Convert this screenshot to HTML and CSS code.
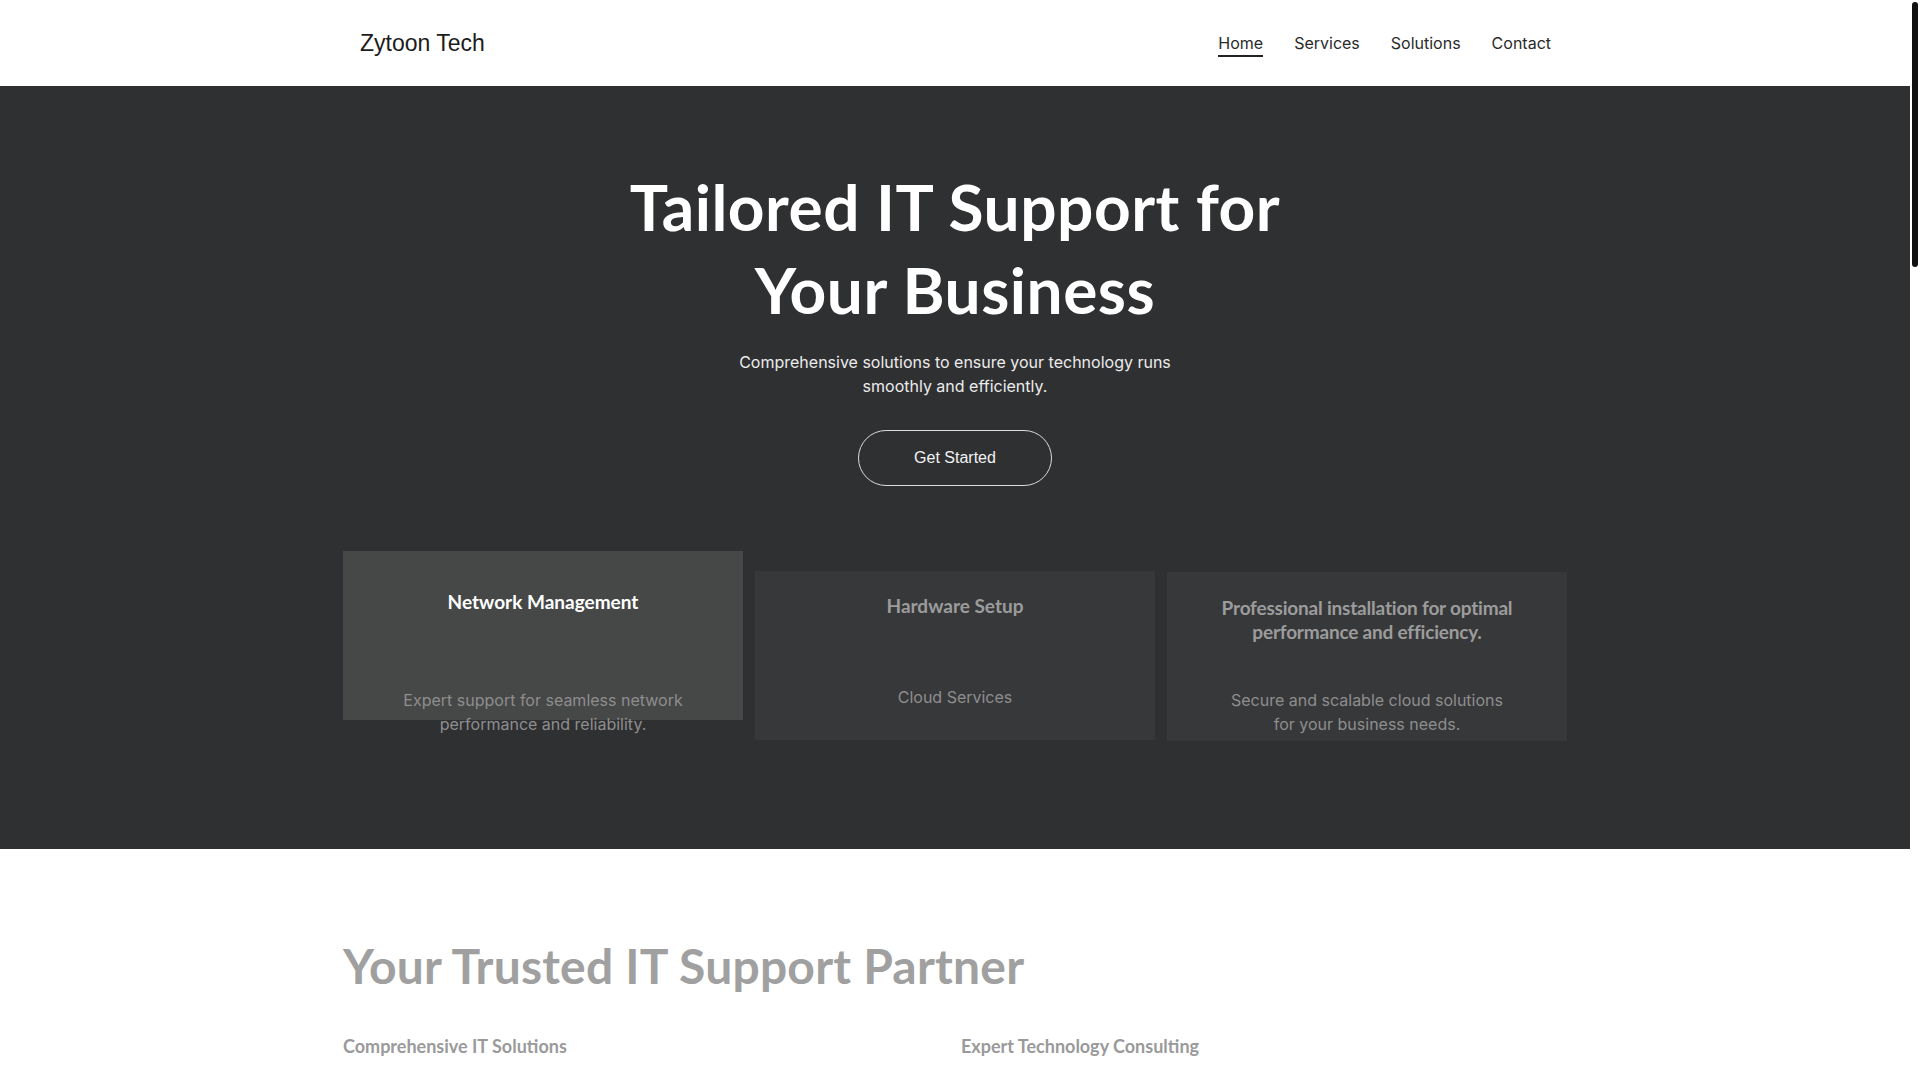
FILE: index.html
```html
<!DOCTYPE html>
<html lang="en">
<head>
<meta charset="utf-8">
<title>Zytoon Tech</title>
<link rel="stylesheet" href="styles.css">
</head>
<body>
<div class="scroll-thumb" aria-hidden="true"></div>
<header class="site-header">
  <div class="container header-inner">
    <a class="logo" href="#">Zytoon Tech</a>
    <nav class="nav">
      <a class="nav-link is-active" href="#">Home</a>
      <a class="nav-link" href="#services">Services</a>
      <a class="nav-link" href="#solutions">Solutions</a>
      <a class="nav-link" href="#contact">Contact</a>
    </nav>
  </div>
</header>

<main>
  <section class="hero">
    <div class="container hero-inner">
      <h1 class="hero-title">Tailored IT Support for Your Business</h1>
      <p class="hero-lead">Comprehensive solutions to ensure your technology runs smoothly and efficiently.</p>
      <a class="btn-outline" href="#contact">Get Started</a>

      <div class="cards">
        <div class="card card--one">
          <h3 class="card-title">Network Management</h3>
          <p class="card-text">Expert support for seamless network performance and reliability.</p>
        </div>
        <div class="card card--two">
          <h3 class="card-title">Hardware Setup</h3>
          <p class="card-text">Cloud Services</p>
        </div>
        <div class="card card--three">
          <h3 class="card-title">Professional installation for optimal performance and efficiency.</h3>
          <p class="card-text">Secure and scalable cloud solutions for your business needs.</p>
        </div>
      </div>
    </div>
  </section>

  <section class="about" id="services">
    <div class="container">
      <h2 class="section-title">Your Trusted IT Support Partner</h2>
      <div class="about-grid">
        <div class="about-col">
          <h3 class="about-heading">Comprehensive IT Solutions</h3>
          <p class="about-text">From day-to-day helpdesk support to long-term infrastructure planning, we keep your systems secure, stable and ready to grow with your business.</p>
        </div>
        <div class="about-col">
          <h3 class="about-heading">Expert Technology Consulting</h3>
          <p class="about-text">Our consultants help you choose the right tools, streamline your workflows and get the most value out of every technology investment.</p>
        </div>
      </div>
    </div>
  </section>

  <section class="band" id="solutions">
    <div class="container">
      <h2 class="section-title">Solutions</h2>
      <p class="about-text">Managed services, cybersecurity, cloud migration and on-site support tailored to your team.</p>
    </div>
  </section>

  <section class="band band--dark" id="contact">
    <div class="container">
      <h2 class="section-title section-title--light">Contact</h2>
      <p class="about-text">Get in touch to discuss how we can support your business.</p>
    </div>
  </section>
</main>

<footer class="site-footer">
  <div class="container">© Zytoon Tech</div>
</footer>
</body>
</html>
```

FILE: styles.css
```css
* { box-sizing: border-box; }

html { background: #ffffff; }

body {
  margin: 0 10px 0 0;
  font-family: "Inter", "Liberation Sans", sans-serif;
  color: #222222;
  background: #ffffff;
}

/* thin custom scrollbar thumb drawn over the page edge */
.scroll-thumb {
  position: fixed;
  top: 2px;
  right: 2px;
  width: 6px;
  height: 265px;
  border-radius: 3px;
  background: #111111;
  z-index: 10;
}

a { text-decoration: none; color: inherit; }

.container {
  width: 1224px;
  margin: 0 auto;
}

/* Header */
.site-header {
  height: 86px;
  background: #ffffff;
}
.header-inner {
  height: 100%;
  display: flex;
  align-items: center;
  justify-content: space-between;
  padding: 0 16px 0 17px;
}
.logo {
  font-family: "Liberation Sans", Arial, sans-serif;
  font-size: 23px;
  color: #1c1c1c;
}
.nav {
  display: flex;
  gap: 31px;
  align-items: center;
}
.nav-link {
  font-size: 16px;
  line-height: 24px;
  color: #2a2a2a;
  border-bottom: 2px solid transparent;
  padding-top: 2px;
}
.nav-link.is-active { border-bottom-color: #222222; }

/* Hero */
.hero {
  background: #2f3032;
  padding: 79px 0 129px;
}
.hero-inner {
  display: flex;
  flex-direction: column;
  align-items: center;
  text-align: center;
}
.hero-title {
  margin: 0;
  max-width: 720px;
  font-family: "Lato", sans-serif;
  font-weight: 700;
  font-size: 64px;
  line-height: 83px;
  color: #ffffff;
  letter-spacing: 0.5px;
}
.hero-lead {
  margin: 19px 0 0;
  max-width: 450px;
  font-size: 16px;
  line-height: 24px;
  color: #ececec;
}
.btn-outline {
  margin-top: 32px;
  display: inline-block;
  padding: 15px 55px;
  border: 1px solid #dcdcdc;
  border-radius: 999px;
  font-family: "Liberation Sans", Arial, sans-serif;
  font-size: 16px;
  line-height: 24px;
  color: #f2f2f2;
}

.cards {
  margin-top: 65px;
  width: 100%;
  display: grid;
  grid-template-columns: repeat(3, 1fr);
  gap: 12px;
}
.card {
  position: relative;
  isolation: isolate;
  height: 169px;
  padding: 39px 30px 0;
  text-align: center;
}
.card::before {
  content: "";
  position: absolute;
  left: 0;
  right: 0;
  top: 0;
  height: 169px;
  background: #37383a;
  z-index: -1;
}
.card--one::before { background: #464747; }
.card--two::before { top: 20px; }
.card--three::before { top: 21px; }

.card-title {
  margin: 0;
  height: 98px;
  font-family: "Lato", sans-serif;
  font-weight: 700;
  font-size: 19px;
  line-height: 24px;
  color: #9c9c9c;
}
.card--one .card-title { color: #ffffff; }
.card--two .card-title { padding-top: 4px; }
.card--three .card-title { padding-top: 6px; letter-spacing: -0.2px; }

.card-text {
  margin: 0;
  padding: 0 28px;
  font-size: 16px;
  line-height: 24px;
  color: #8e8e8e;
}
.card--two .card-text { margin-top: -3px; }

/* About */
.about {
  padding: 88px 0 120px;
  min-height: 1100px;
}
.section-title {
  margin: 0;
  font-family: "Lato", sans-serif;
  font-weight: 700;
  font-size: 48px;
  line-height: 57.6px;
  color: #a0a0a0;
  letter-spacing: 0.2px;
}
.section-title--light { color: #e6e6e6; }
.about-grid {
  margin-top: 39px;
  display: grid;
  grid-template-columns: 1fr 1fr;
  gap: 12px;
}
.about-heading {
  margin: 0;
  font-family: "Lato", sans-serif;
  font-weight: 700;
  font-size: 18px;
  line-height: 25px;
  color: #9a9a9a;
}
.about-text {
  margin: 24px 0 0;
  max-width: 520px;
  font-size: 16px;
  line-height: 24px;
  color: #8e8e8e;
}

.band {
  min-height: 1000px;
  padding: 100px 0;
}
.band--dark { background: #2f3032; }

.site-footer {
  padding: 40px 0;
  min-height: 451px;
  font-size: 14px;
  color: #8e8e8e;
}
```
